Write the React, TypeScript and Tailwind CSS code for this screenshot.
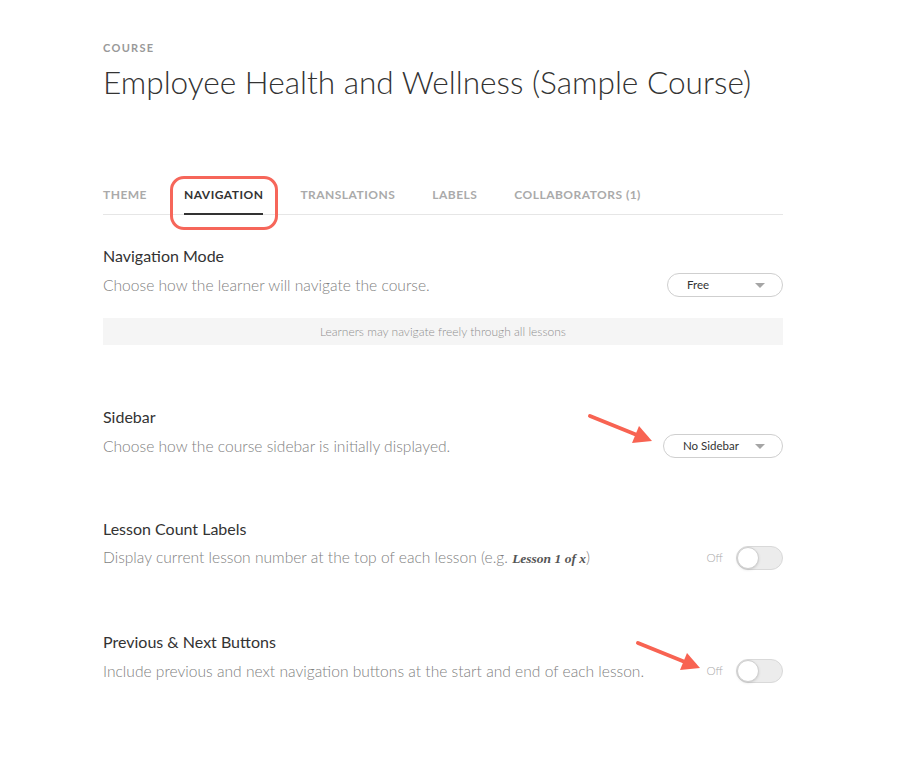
import React from 'react';

const tabs = ['Theme', 'Navigation', 'Translations', 'Labels', 'Collaborators (1)'];

function Select({ value, width }: { value: string; width: string }) {
  return (
    <div className={`${width} h-[24px] rounded-full border border-[#cfcfcf] bg-white flex items-center justify-between pl-[19px] pr-[17px] shrink-0`}>
      <span className="text-[11.5px] text-[#333]">{value}</span>
      <span className="w-0 h-0 border-l-[5px] border-r-[5px] border-t-[5px] border-l-transparent border-r-transparent border-t-[#a5a5a5]" />
    </div>
  );
}

function Toggle() {
  return (
    <div className="flex items-center gap-[13px] shrink-0">
      <span className="text-[11.5px] font-light text-[#aaa]">Off</span>
      <div className="w-[47px] h-[24px] rounded-full bg-[#ececec] border border-[#d9d9d9] relative">
        <div className="absolute left-0 top-0 w-[22px] h-[22px] rounded-full bg-white border border-[#cfcfcf] shadow-sm" />
      </div>
    </div>
  );
}

function Setting({ title, children, control }: { title: string; children: React.ReactNode; control: React.ReactNode }) {
  return (
    <div>
      <h3 className="text-[16px] leading-[20px] text-[#333]">{title}</h3>
      <div className="flex items-center justify-between mt-[7px]">
        <p className="text-[15.6px] leading-[20px] font-light text-[#7f7f7f]">{children}</p>
        {control}
      </div>
    </div>
  );
}

export default function App() {
  return (
    <div className="relative w-[911px] h-[778px] bg-white font-['Lato',sans-serif]">
      <div className="pl-[103px] pt-[40px] w-[783px]">
        <div className="text-[11px] leading-[16px] font-bold tracking-[0.12em] text-[#999]">COURSE</div>
        <h1 className="mt-[8px] text-[31.6px] leading-[36px] font-light text-[#333]">Employee Health and Wellness (Sample Course)</h1>

        <div className="mt-[87px] flex gap-[37px] border-b border-[#e6e6e6]">
          {tabs.map(t => (
            <div key={t} className="relative">
              <div className={`text-[12px] leading-[16px] font-bold tracking-[0.04em] uppercase pb-[10px] ${t === 'Navigation' ? 'text-[#333] border-b-2 border-[#333] -mb-px' : 'text-[#aaa]'}`}>
                {t}
              </div>
              {t === 'Navigation' && (
                <div className="absolute -left-[14px] -right-[15px] -top-[11px] -bottom-[16px] border-[3px] border-[#f6665a] rounded-[14px]" />
              )}
            </div>
          ))}
        </div>

        <div className="mt-[31px]">
          <Setting title="Navigation Mode" control={<Select value="Free" width="w-[116px]" />}>
            Choose how the learner will navigate the course.
          </Setting>
          <div className="mt-[21px] h-[27px] bg-[#f5f5f5] flex items-center justify-center text-[12px] font-light text-[#8f8f8f]">
            Learners may navigate freely through all lessons
          </div>
        </div>

        <div className="mt-[62px]">
          <Setting title="Sidebar" control={<Select value="No Sidebar" width="w-[120px]" />}>
            Choose how the course sidebar is initially displayed.
          </Setting>
        </div>

        <div className="mt-[61px]">
          <Setting title="Lesson Count Labels" control={<Toggle />}>
            Display current lesson number at the top of each lesson (e.g.{' '}
            <em className="font-['Liberation_Serif',serif] text-[13.5px] font-bold text-[#555]">Lesson 1 of x</em>)
          </Setting>
        </div>

        <div className="mt-[62px]">
          <Setting title="Previous & Next Buttons" control={<Toggle />}>
            Include previous and next navigation buttons at the start and end of each lesson.
          </Setting>
        </div>
      </div>

      <svg className="absolute inset-0 pointer-events-none" width="911" height="778">
        <line x1="590" y1="416" x2="637" y2="435" stroke="#f86352" strokeWidth="4" strokeLinecap="round" />
        <polygon points="652,441 632,443 639,426" fill="#f86352" />
        <line x1="638" y1="643" x2="685" y2="662" stroke="#f86352" strokeWidth="4" strokeLinecap="round" />
        <polygon points="700,668 680,670 687,653" fill="#f86352" />
      </svg>
    </div>
  );
}
